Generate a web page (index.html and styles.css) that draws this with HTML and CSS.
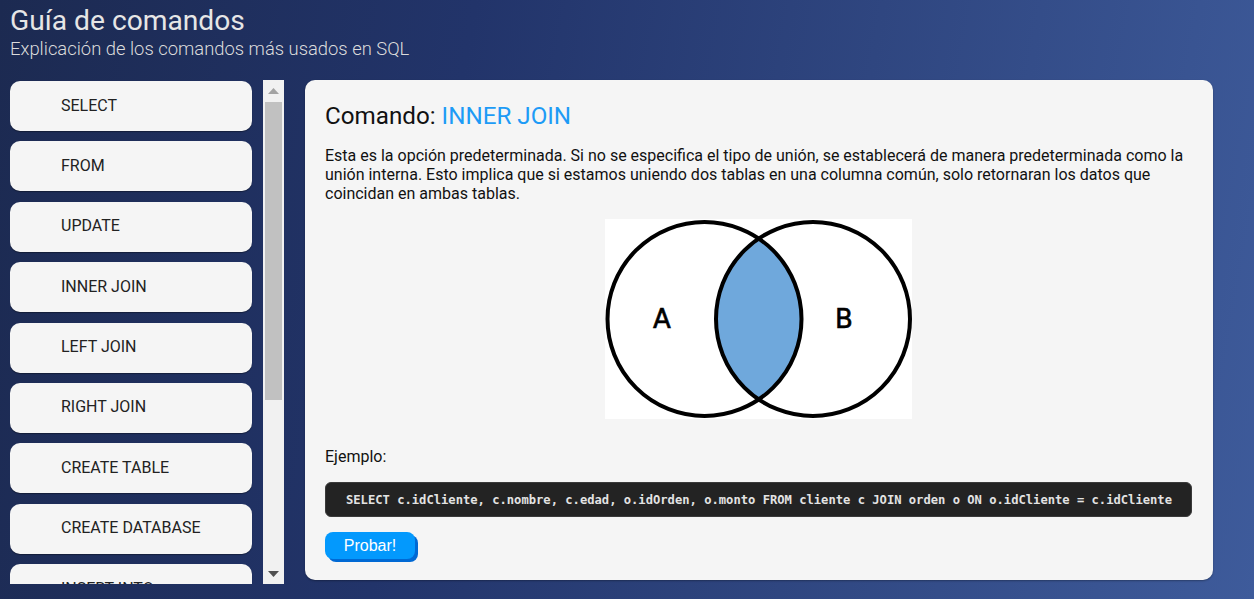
FILE: index.html
```html
<!DOCTYPE html>
<html lang="es">
<head>
<meta charset="utf-8">
<title>Guía de comandos</title>
<link rel="stylesheet" href="styles.css">
</head>
<body>
<header class="top">
  <h1 class="title">Guía de comandos</h1>
  <p class="subtitle">Explicación de los comandos más usados en SQL</p>
</header>
<main class="layout">
  <nav class="sidebar">
    <div class="list-viewport">
      <ul class="cmd-list">
        <li class="cmd">SELECT</li>
        <li class="cmd">FROM</li>
        <li class="cmd">UPDATE</li>
        <li class="cmd">INNER JOIN</li>
        <li class="cmd">LEFT JOIN</li>
        <li class="cmd">RIGHT JOIN</li>
        <li class="cmd">CREATE TABLE</li>
        <li class="cmd">CREATE DATABASE</li>
        <li class="cmd">INSERT INTO</li>
        <li class="cmd">DELETE</li>
        <li class="cmd">WHERE</li>
        <li class="cmd">ORDER BY</li>
        <li class="cmd">GROUP BY</li>
      </ul>
    </div>
    <div class="scrollbar" aria-hidden="true">
      <div class="sb-btn">
        <svg width="11" height="6" viewBox="0 0 11 6"><polygon points="0,6 11,6 5.5,0" fill="#a3a3a3"/></svg>
      </div>
      <div class="sb-track">
        <div class="sb-thumb"></div>
      </div>
      <div class="sb-btn">
        <svg width="11" height="6" viewBox="0 0 11 6"><polygon points="0,0 11,0 5.5,6" fill="#505050"/></svg>
      </div>
    </div>
  </nav>
  <section class="card">
    <h2 class="cmd-title">Comando: <span class="cmd-name">INNER JOIN</span></h2>
    <p class="desc">Esta es la opción predeterminada. Si no se especifica el tipo de unión, se establecerá de manera predeterminada como la unión interna. Esto implica que si estamos uniendo dos tablas en una columna común, solo retornaran los datos que coincidan en ambas tablas.</p>
    <div class="figure">
      <svg class="venn" width="307" height="200" viewBox="0 0 307 200">
        <rect x="0" y="0" width="307" height="200" fill="#ffffff"/>
        <path d="M153.75,19.6 A97,97 0 0,1 153.75,180.4 A97,97 0 0,1 153.75,19.6 Z" fill="#6fa8dc"/>
        <circle cx="99.5" cy="100" r="97" fill="none" stroke="#000" stroke-width="4"/>
        <circle cx="208" cy="100" r="97" fill="none" stroke="#000" stroke-width="4"/>
        <text x="57" y="109" class="venn-label" text-anchor="middle">A</text>
        <text x="239" y="109" class="venn-label" text-anchor="middle">B</text>
      </svg>
    </div>
    <p class="example-label">Ejemplo:</p>
    <pre class="code">SELECT c.idCliente, c.nombre, c.edad, o.idOrden, o.monto FROM cliente c JOIN orden o ON o.idCliente = c.idCliente</pre>
    <button class="try-btn" type="button">Probar!</button>
  </section>
</main>
</body>
</html>
```

FILE: styles.css
```css
* {
  box-sizing: border-box;
}

html, body {
  margin: 0;
  padding: 0;
  height: 100%;
}

body {
  font-family: Roboto, "Liberation Sans", Arial, sans-serif;
  background: linear-gradient(100deg, #1c2a51 0%, #22346a 35%, #2f4680 65%, #3e5b9b 100%);
  color: #111;
  overflow: hidden;
  padding: 0 10px;
}

.top {
  height: 80px;
  padding-top: 4px;
}

.title {
  margin: 0;
  font-size: 28.2px;
  font-weight: 400;
  line-height: 34px;
  color: #e6e6e6;
}

.subtitle {
  margin: 0;
  font-size: 18.4px;
  font-weight: 300;
  line-height: 22px;
  color: #dcdcdc;
}

.layout {
  display: flex;
  align-items: flex-start;
  gap: 21px;
}

.sidebar {
  width: 274px;
  height: 504px;
  display: flex;
  flex: none;
}

.list-viewport {
  width: 253px;
  height: 100%;
  overflow: hidden;
}

.scrollbar {
  width: 21px;
  height: 100%;
  background: #f1f1f1;
  display: flex;
  flex-direction: column;
}

.sb-btn {
  height: 21px;
  display: flex;
  align-items: center;
  justify-content: center;
  flex: none;
}

.sb-track {
  flex: 1;
  padding: 1px 2px 0 2px;
}

.sb-thumb {
  height: 298px;
  background: #c1c1c1;
}

.cmd-list {
  list-style: none;
  margin: 0;
  padding: 1px 0 0 0;
}

.cmd {
  width: 242px;
  height: 50px;
  margin-bottom: 10.4px;
  background: #f5f5f5;
  border-radius: 10px;
  box-shadow: 0 1px 1px rgba(0, 0, 0, 0.35);
  display: flex;
  align-items: center;
  padding: 0 0 2px 51px;
  font-size: 16px;
  color: #222;
}

.card {
  width: 908px;
  height: 500px;
  background: #f5f5f5;
  border-radius: 10px;
  box-shadow: 0 1px 2px rgba(0, 0, 0, 0.3);
  padding: 22px 21px 0 20px;
  flex: none;
}

.cmd-title {
  margin: 0;
  font-size: 24.2px;
  font-weight: 400;
  line-height: 28px;
  color: #111;
}

.cmd-name {
  color: #1d9bf6;
}

.desc {
  margin: 16px 0 0 0;
  font-size: 16px;
  line-height: 19px;
  color: #111;
}

.figure {
  display: flex;
  justify-content: center;
  margin-top: 16px;
}

.venn {
  display: block;
}

.venn-label {
  font-family: "DejaVu Sans", "Liberation Sans", sans-serif;
  font-size: 26px;
  fill: #000;
  stroke: #000;
  stroke-width: 0.6px;
}

.example-label {
  margin: 28px 0 0 0;
  font-size: 16px;
  line-height: 19px;
  color: #111;
}

.code {
  margin: 16px 0 0 0;
  height: 35px;
  background: #232323;
  border: 1px solid #3a3a3a;
  border-radius: 6px;
  color: #e3e3e3;
  font-family: "DejaVu Sans Mono", "Liberation Mono", monospace;
  font-weight: 700;
  font-size: 12.15px;
  line-height: 34px;
  padding: 0 0 0 20px;
  white-space: pre;
}

.try-btn {
  margin-top: 15px;
  width: 90px;
  height: 27px;
  border: none;
  border-radius: 8px;
  background: #0399fd;
  box-shadow: 3px 3px 0 #0069d4;
  color: #fff;
  font-family: "Liberation Sans", Arial, sans-serif;
  font-size: 16px;
  padding: 0;
}
```
